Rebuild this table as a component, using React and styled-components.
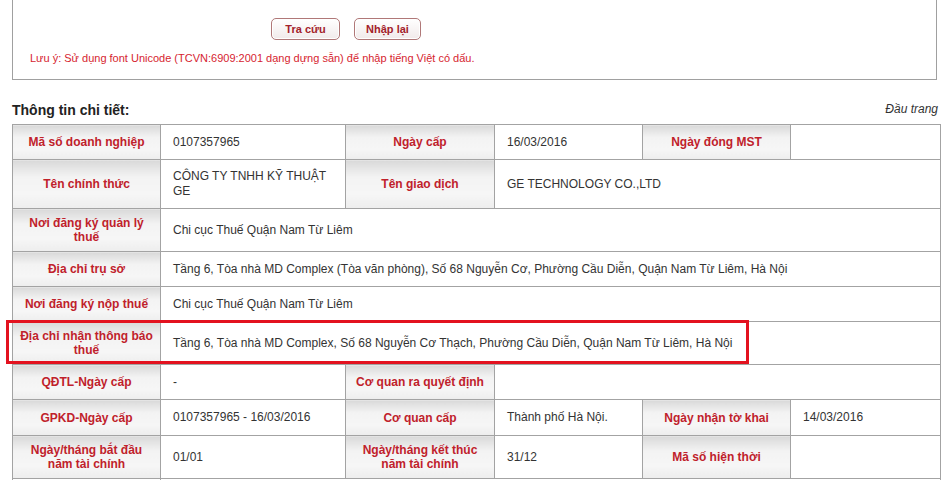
import React from "react";
import styled, { createGlobalStyle } from "styled-components";

const Global = createGlobalStyle`
  html, body { margin: 0; padding: 0; background: #fff; }
  body { font-family: Arial, "Liberation Sans", sans-serif; color: #333; }
`;

const Page = styled.div`
  width: 928px;
  margin-left: 12px;
`;

const SearchPanel = styled.div`
  width: 925px;
  height: 80px;
  border: 1px solid #a0a0a0;
  border-top: none;
  display: flex;
  flex-direction: column;
  padding-top: 18px;
  box-sizing: border-box;
`;

const ButtonRow = styled.div`
  display: flex;
  gap: 14px;
  margin-left: 258px;
`;

const Btn = styled.button`
  width: ${(p) => p.$w}px;
  height: 22px;
  border: 1px solid #b07878;
  border-radius: 5px;
  background: linear-gradient(#ffffff, #f1eaea);
  color: #a3222b;
  font-family: Arial, "Liberation Sans", sans-serif;
  font-weight: bold;
  font-size: 11px;
  padding: 0;
  box-shadow: inset 0 0 0 1px #fff;
`;

const Note = styled.div`
  margin-top: 12px;
  margin-left: 17px;
  font-size: 11px;
  color: #d6242f;
`;

const HeadRow = styled.div`
  display: flex;
  justify-content: space-between;
  align-items: flex-end;
  margin-top: 21px;
  height: 17px;
`;

const Title = styled.div`
  font-size: 14px;
  font-weight: bold;
  color: #222;
`;

const TopLink = styled.div`
  font-size: 12px;
  font-style: italic;
  color: #333;
  margin-right: 2px;
  margin-bottom: 2px;
`;

const TableWrap = styled.div`
  position: relative;
  margin-top: 6px;
`;

const Table = styled.table`
  width: 928px;
  table-layout: fixed;
  border-collapse: collapse;
  font-size: 12px;
`;

const Row = styled.tr`
  height: ${(p) => p.$h}px;
`;

const Label = styled.td`
  border: 1px solid #a3a3a3;
  background: linear-gradient(#d9d9d9 0%, #f3f3f3 35%, #f6f6f6 70%, #ededed 100%);
  color: #c0212b;
  font-weight: bold;
  text-align: center;
  padding: 2px 3px;
  line-height: 14px;
`;

const Value = styled.td`
  border: 1px solid #a3a3a3;
  background: #fff;
  color: #333;
  padding: 2px 12px;
  line-height: 15px;
`;

const Highlight = styled.div`
  position: absolute;
  left: -6px;
  top: 196px;
  width: 743px;
  height: 44px;
  box-sizing: border-box;
  border: 3px solid #e3121f;
  pointer-events: none;
`;

export default function App() {
  return (
    <>
      <Global />
      <Page>
        <SearchPanel>
          <ButtonRow>
            <Btn $w={69}>Tra cứu</Btn>
            <Btn $w={67}>Nhập lại</Btn>
          </ButtonRow>
          <Note>
            Lưu ý: Sử dụng font Unicode (TCVN:6909:2001 dạng dựng sẵn) để nhập tiếng Việt có dấu.
          </Note>
        </SearchPanel>
        <HeadRow>
          <Title>Thông tin chi tiết:</Title>
          <TopLink>Đầu trang</TopLink>
        </HeadRow>
        <TableWrap>
          <Table>
            <colgroup>
              <col style={{ width: 148 }} />
              <col style={{ width: 185 }} />
              <col style={{ width: 149 }} />
              <col style={{ width: 148 }} />
              <col style={{ width: 148 }} />
              <col style={{ width: 150 }} />
            </colgroup>
            <tbody>
              <Row $h={35}>
                <Label>Mã số doanh nghiệp</Label>
                <Value>0107357965</Value>
                <Label>Ngày cấp</Label>
                <Value>16/03/2016</Value>
                <Label>Ngày đóng MST</Label>
                <Value></Value>
              </Row>
              <Row $h={49}>
                <Label>Tên chính thức</Label>
                <Value>CÔNG TY TNHH KỸ THUẬT GE</Value>
                <Label>Tên giao dịch</Label>
                <Value colSpan={3}>GE TECHNOLOGY CO.,LTD</Value>
              </Row>
              <Row $h={43}>
                <Label>Nơi đăng ký quản lý<br />thuế</Label>
                <Value colSpan={5}>Chi cục Thuế Quận Nam Từ Liêm</Value>
              </Row>
              <Row $h={35}>
                <Label>Địa chỉ trụ sở</Label>
                <Value colSpan={5}>
                  Tầng 6, Tòa nhà MD Complex (Tòa văn phòng), Số 68 Nguyễn Cơ, Phường Cầu Diễn, Quận Nam Từ Liêm, Hà Nội
                </Value>
              </Row>
              <Row $h={35}>
                <Label>Nơi đăng ký nộp thuế</Label>
                <Value colSpan={5}>Chi cục Thuế Quận Nam Từ Liêm</Value>
              </Row>
              <Row $h={43}>
                <Label>Địa chỉ nhận thông báo<br />thuế</Label>
                <Value colSpan={5}>
                  Tầng 6, Tòa nhà MD Complex, Số 68 Nguyễn Cơ Thạch, Phường Cầu Diễn, Quận Nam Từ Liêm, Hà Nội
                </Value>
              </Row>
              <Row $h={35}>
                <Label>QĐTL-Ngày cấp</Label>
                <Value>-</Value>
                <Label>Cơ quan ra quyết định</Label>
                <Value colSpan={3}></Value>
              </Row>
              <Row $h={36}>
                <Label>GPKD-Ngày cấp</Label>
                <Value>0107357965 - 16/03/2016</Value>
                <Label>Cơ quan cấp</Label>
                <Value>Thành phố Hà Nội.</Value>
                <Label>Ngày nhận tờ khai</Label>
                <Value>14/03/2016</Value>
              </Row>
              <Row $h={43}>
                <Label>Ngày/tháng bắt đầu<br />năm tài chính</Label>
                <Value>01/01</Value>
                <Label>Ngày/tháng kết thúc<br />năm tài chính</Label>
                <Value>31/12</Value>
                <Label>Mã số hiện thời</Label>
                <Value></Value>
              </Row>
              <Row $h={35}>
                <Value></Value>
                <Value colSpan={5}></Value>
              </Row>
            </tbody>
          </Table>
          <Highlight />
        </TableWrap>
      </Page>
    </>
  );
}
